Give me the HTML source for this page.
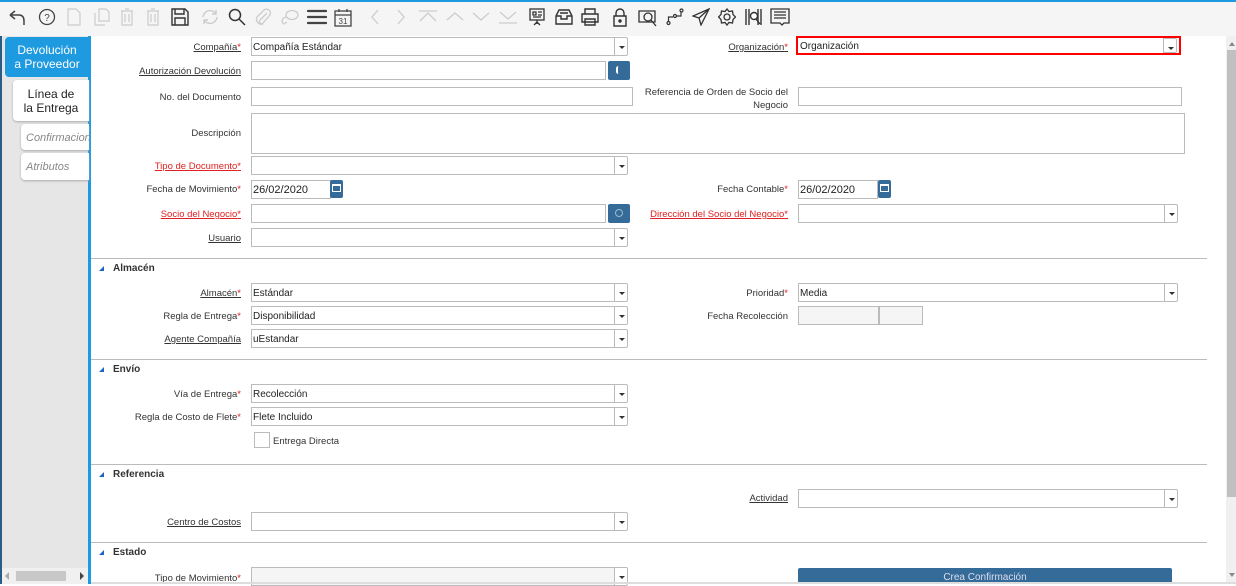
<!DOCTYPE html>
<html><head><meta charset="utf-8"><style>
*{box-sizing:border-box;margin:0;padding:0}
body{width:1236px;height:584px;overflow:hidden;background:#fff;font-family:"Liberation Sans",sans-serif;font-size:10px;color:#333;position:relative}
.a{position:absolute}
.tb{left:0;top:0;width:1236px;height:36px;background:#f5f5f5;border-top:2px solid #1e9ae0}
.left{left:0;top:36px;width:91px;height:548px;background:#e6e6e6;border-left:2px solid #2a5d86;border-right:3px solid #1e9ae0}
.tab{position:absolute;font-size:12px;text-align:center;border-radius:4px 0 0 4px;line-height:14px}
.lbl{position:absolute;text-align:right;font-size:9.5px;color:#333;white-space:nowrap;margin-top:1px}
.u{text-decoration:underline}
.r{color:#e02020}
.s{color:#e02020}
.in{position:absolute;height:19px;border:1px solid #bbb;background:#fff;font-size:10px;padding:4px 1px 2px;white-space:nowrap;color:#222}
.dd{position:absolute;width:14px;height:19px;border:1px solid #bbb;background:#fff;border-radius:0 2px 2px 0}
.dd:after{content:"";position:absolute;left:4px;top:8px;border-left:3px solid transparent;border-right:3px solid transparent;border-top:3px solid #333}
.sep{position:absolute;left:91px;width:1116px;height:1px;background:#bbb}
.sh{position:absolute;left:113px;font-size:10px;font-weight:bold;color:#333}
.tri{position:absolute;left:99px;width:0;height:0;border-left:5px solid transparent;border-bottom:5px solid #1b64c8}
.btn{position:absolute;background:#356b99;border-radius:2px}
svg{position:absolute;top:8px}
</style></head><body>
<div class="a tb"></div>
<svg style="left:7px" width="20" height="20" viewBox="0 0 20 20" fill="none" stroke="#444" stroke-width="1.5"><path d="M3 7 L8 3 M3 7 L8 11 M3 7 H12 Q17 7 17 13 V17"/></svg>
<svg style="left:38px" width="18" height="18" viewBox="0 0 18 18" fill="none" stroke="#444" stroke-width="1.3"><circle cx="9" cy="9" r="7.5"/><text x="9" y="13" font-size="10" text-anchor="middle" fill="#444" stroke="none" font-family="Liberation Sans">?</text></svg>
<svg style="left:67px" width="14" height="18" viewBox="0 0 14 18" fill="none" stroke="#ccc" stroke-width="1.2"><path d="M1 1H9L13 5V17H1Z"/></svg>
<svg style="left:94px" width="16" height="18" viewBox="0 0 16 18" fill="none" stroke="#ccc" stroke-width="1.2"><path d="M5 1H12L15 4V13H5Z M1 5V17H11"/></svg>
<svg style="left:120px" width="14" height="18" viewBox="0 0 14 18" fill="none" stroke="#ccc" stroke-width="1.2"><path d="M1 3H13 M5 1H9 M2 3V17H12V3 M5 6V14 M9 6V14"/></svg>
<svg style="left:146px" width="14" height="18" viewBox="0 0 14 18" fill="none" stroke="#ccc" stroke-width="1.2"><path d="M1 3H13 M5 1H9 M2 3V17H12V3 M5 6V14 M9 6V14"/></svg>
<svg style="left:171px" width="18" height="18" viewBox="0 0 18 18" fill="none" stroke="#333" stroke-width="1.4"><path d="M1 1H14L17 4V17H1Z M4 1V6H13V1 M4 10H14V17H4Z"/></svg>
<svg style="left:200px" width="20" height="18" viewBox="0 0 20 18" fill="none" stroke="#ccc" stroke-width="1.4"><path d="M3 9A7 7 0 0 1 16 6 M17 9A7 7 0 0 1 4 12 M16 2V6H12 M4 16V12H8"/></svg>
<svg style="left:228px" width="18" height="18" viewBox="0 0 18 18" fill="none" stroke="#333" stroke-width="1.5"><circle cx="7" cy="7" r="5.5"/><path d="M11 11L17 17"/></svg>
<svg style="left:254px" width="18" height="18" viewBox="0 0 18 18" fill="none" stroke="#ccc" stroke-width="1.3"><path d="M13 5L6 12A2 2 0 0 0 9 15L16 7A4 4 0 0 0 10 2L3 9A5 5 0 0 0 9 16"/></svg>
<svg style="left:280px" width="20" height="18" viewBox="0 0 20 18" fill="none" stroke="#ccc" stroke-width="1.3"><ellipse cx="12" cy="7" rx="6" ry="4.5"/><path d="M6 9A5 4 0 0 0 4 16L7 14"/></svg>
<svg style="left:307px" width="20" height="18" viewBox="0 0 20 18" fill="none" stroke="#444" stroke-width="2.2"><path d="M1 3H19 M1 9H19 M1 15H19" stroke-linecap="round"/></svg>
<svg style="left:334px" width="18" height="19" viewBox="0 0 18 19" fill="none" stroke="#444" stroke-width="1.3"><rect x="1" y="3" width="16" height="15"/><path d="M1 7H17 M5 1V4 M13 1V4"/><text x="9" y="16" font-size="8" text-anchor="middle" fill="#444" stroke="none" font-family="Liberation Sans">31</text></svg>
<svg style="left:370px" width="10" height="18" viewBox="0 0 10 18" fill="none" stroke="#ccc" stroke-width="1.3"><path d="M8 2L2 9L8 16"/></svg>
<svg style="left:396px" width="10" height="18" viewBox="0 0 10 18" fill="none" stroke="#ccc" stroke-width="1.3"><path d="M2 2L8 9L2 16"/></svg>
<svg style="left:418px" width="20" height="18" viewBox="0 0 20 18" fill="none" stroke="#ccc" stroke-width="1.3"><path d="M1 3H19 M2 13L10 5L18 13"/></svg>
<svg style="left:445px" width="20" height="18" viewBox="0 0 20 18" fill="none" stroke="#ccc" stroke-width="1.3"><path d="M2 12L10 5L18 12"/></svg>
<svg style="left:471px" width="20" height="18" viewBox="0 0 20 18" fill="none" stroke="#ccc" stroke-width="1.3"><path d="M2 5L10 12L18 5"/></svg>
<svg style="left:498px" width="20" height="18" viewBox="0 0 20 18" fill="none" stroke="#ccc" stroke-width="1.3"><path d="M2 4L10 11L18 4 M1 15H19"/></svg>
<svg style="left:529px" width="16" height="18" viewBox="0 0 16 18" fill="none" stroke="#333" stroke-width="1.3"><rect x="1" y="1" width="14" height="11"/><path d="M4 4H7V7H4Z M9 4H13 M9 7H13 M4 9H12 M8 12V16 M5 17L8 14L11 17"/></svg>
<svg style="left:555px" width="18" height="18" viewBox="0 0 18 18" fill="none" stroke="#333" stroke-width="1.4"><path d="M1 8L4 2H14L17 8V16H1Z M1 8H6V11H12V8H17 M5 5H13"/></svg>
<svg style="left:581px" width="18" height="18" viewBox="0 0 18 18" fill="none" stroke="#333" stroke-width="1.4"><path d="M4 6V1H14V6 M1 6H17V14H1Z M4 11H14V17H4Z"/></svg>
<svg style="left:613px" width="14" height="19" viewBox="0 0 14 19" fill="none" stroke="#333" stroke-width="1.4"><path d="M3 8V5A4 4 0 0 1 11 5V8 M1 8H13V18H1Z"/><circle cx="7" cy="13" r="1" fill="#333"/></svg>
<svg style="left:638px" width="20" height="19" viewBox="0 0 20 19" fill="none" stroke="#333" stroke-width="1.3"><path d="M1 3H17V14H1Z"/><circle cx="10" cy="9" r="4"/><path d="M13 12L18 18"/></svg>
<svg style="left:666px" width="18" height="18" viewBox="0 0 18 18" fill="none" stroke="#333" stroke-width="1.2"><circle cx="2.5" cy="15" r="1.5"/><circle cx="9" cy="8" r="1.5"/><circle cx="15.5" cy="2.5" r="1.5"/><path d="M2.5 13V9H7 M11 8H15V4"/></svg>
<svg style="left:692px" width="18" height="18" viewBox="0 0 18 18" fill="none" stroke="#333" stroke-width="1.3"><path d="M17 1L1 8L7 10L9 17Z M17 1L7 10"/></svg>
<svg style="left:718px" width="18" height="18" viewBox="0 0 18 18" fill="none" stroke="#333" stroke-width="1.3"><circle cx="9" cy="9" r="3"/><path d="M9 1L11 3.5L14.5 3L15 6.5L17.5 9L15 11.5L14.5 15L11 14.5L9 17L7 14.5L3.5 15L3 11.5L0.5 9L3 6.5L3.5 3L7 3.5Z"/></svg>
<svg style="left:745px" width="18" height="18" viewBox="0 0 18 18" fill="none" stroke="#333" stroke-width="1.4"><path d="M1 1V17 M4 1V17 M13 1V17 M16 1V17"/><circle cx="9" cy="8" r="3.5" fill="#fff"/><path d="M11 11L15 16"/></svg>
<svg style="left:770px" width="20" height="19" viewBox="0 0 20 19" fill="none" stroke="#333" stroke-width="1.3"><path d="M1 1H19V15H14L12 17L10 15H1Z M4 4H16 M4 7H16 M4 10H16"/></svg>

<div class="a left"></div>
<div class="tab" style="left:5px;top:37px;width:84px;height:40px;background:#1e9ae0;color:#fff;padding-top:6px">Devolución<br>a Proveedor</div>
<div class="tab" style="left:13px;top:80px;width:76px;height:41px;background:#fff;color:#222;padding-top:7px;box-shadow:0 1px 2px #aaa">Línea de<br>la Entrega</div>
<div class="tab" style="left:21px;top:124px;width:68px;height:26px;background:#fff;color:#888;font-style:italic;font-size:11px;text-align:left;padding:7px 0 0 5px;overflow:hidden;white-space:nowrap;box-shadow:0 1px 2px #aaa">Confirmacion</div>
<div class="tab" style="left:21px;top:153px;width:68px;height:27px;background:#fff;color:#888;font-style:italic;font-size:11px;text-align:left;padding:7px 0 0 5px;box-shadow:0 1px 2px #aaa">Atributos</div>
<div class="a" style="left:2px;top:568px;width:86px;height:16px;background:#f0f0f0"></div>
<div class="a" style="left:16px;top:571px;width:50px;height:10px;background:#c8c8c8"></div>
<div class="a" style="left:5px;top:572px;border-right:4px solid #aaa;border-top:4px solid transparent;border-bottom:4px solid transparent"></div>
<div class="a" style="left:80px;top:572px;border-left:4px solid #444;border-top:4px solid transparent;border-bottom:4px solid transparent"></div>

<div class="a" style="left:1226px;top:36px;width:10px;height:548px;background:#f0f0f0"></div>
<div class="a" style="left:1227px;top:50px;width:9px;height:447px;background:#c0c0c0"></div>
<div class="a" style="left:1229px;top:42px;border-bottom:4px solid #888;border-left:3px solid transparent;border-right:3px solid transparent"></div>
<div class="a" style="left:1229px;top:573px;border-top:4px solid #888;border-left:3px solid transparent;border-right:3px solid transparent"></div>

<div class="lbl u" style="right:995px;top:41px">Compañía<span class="s">*</span></div>
<div class="in" style="left:251px;top:37px;width:364px">Compañía Estándar</div><div class="dd" style="left:614px;top:37px"></div>
<div class="lbl u" style="right:995px;top:65px">Autorización Devolución</div>
<div class="in" style="left:251px;top:61px;width:355px"></div>
<div class="btn" style="left:608px;top:61px;width:22px;height:19px"><div style="position:absolute;left:8px;top:5px;width:5px;height:8px;border-left:2px solid #fff;border-radius:3px"></div></div>
<div class="lbl" style="right:995px;top:91px">No. del Documento</div>
<div class="in" style="left:251px;top:87px;width:382px"></div>
<div class="lbl" style="right:995px;top:127px">Descripción</div>
<div class="in" style="left:251px;top:113px;width:934px;height:41px"></div>
<div class="lbl u r" style="right:995px;top:160px">Tipo de Documento<span class="s">*</span></div>
<div class="in" style="left:251px;top:156px;width:364px"></div><div class="dd" style="left:614px;top:156px"></div>
<div class="lbl" style="right:995px;top:183px">Fecha de Movimiento<span class="s">*</span></div>
<div class="in" style="left:251px;top:180px;width:80px;font-size:11px;padding-top:3px">26/02/2020</div>
<div class="btn" style="left:330px;top:180px;width:13px;height:18px"><div style="position:absolute;left:2px;top:4px;width:9px;height:8px;border:1px solid #fff;border-top-width:2px"></div></div>
<div class="lbl u r" style="right:995px;top:208px">Socio del Negocio<span class="s">*</span></div>
<div class="in" style="left:251px;top:204px;width:355px"></div>
<div class="btn" style="left:608px;top:204px;width:22px;height:19px"><div style="position:absolute;left:7px;top:5px;width:8px;height:8px;border:1px solid #9bb8d0;border-radius:50%"></div></div>
<div class="lbl u" style="right:995px;top:232px">Usuario</div>
<div class="in" style="left:251px;top:228px;width:364px"></div><div class="dd" style="left:614px;top:228px"></div>

<div class="lbl u" style="right:448px;top:41px">Organización<span class="s">*</span></div>
<div class="in" style="left:796px;top:36px;width:385px;height:19px;border:2px solid #f00;padding:3px 2px">Organización</div><div class="dd" style="left:1163px;top:38px;height:15px"></div>
<div class="lbl" style="right:448px;top:85px;line-height:13px">Referencia de Orden de Socio del<br>Negocio</div>
<div class="in" style="left:798px;top:87px;width:384px"></div>
<div class="lbl" style="right:448px;top:183px">Fecha Contable<span class="s">*</span></div>
<div class="in" style="left:798px;top:180px;width:80px;font-size:11px;padding-top:3px">26/02/2020</div>
<div class="btn" style="left:878px;top:180px;width:13px;height:18px"><div style="position:absolute;left:2px;top:4px;width:9px;height:8px;border:1px solid #fff;border-top-width:2px"></div></div>
<div class="lbl u r" style="right:448px;top:208px">Dirección del Socio del Negocio<span class="s">*</span></div>
<div class="in" style="left:798px;top:204px;width:367px"></div><div class="dd" style="left:1164px;top:204px"></div>

<div class="sep" style="top:258px"></div>
<div class="tri" style="top:266px"></div><div class="sh" style="top:263px">Almacén</div>
<div class="lbl u" style="right:995px;top:287px">Almacén<span class="s">*</span></div>
<div class="in" style="left:251px;top:283px;width:364px">Estándar</div><div class="dd" style="left:614px;top:283px"></div>
<div class="lbl" style="right:995px;top:310px">Regla de Entrega<span class="s">*</span></div>
<div class="in" style="left:251px;top:306px;width:364px">Disponibilidad</div><div class="dd" style="left:614px;top:306px"></div>
<div class="lbl u" style="right:995px;top:333px">Agente Compañía</div>
<div class="in" style="left:251px;top:329px;width:364px">uEstandar</div><div class="dd" style="left:614px;top:329px"></div>
<div class="lbl" style="right:448px;top:287px">Prioridad<span class="s">*</span></div>
<div class="in" style="left:798px;top:283px;width:367px">Media</div><div class="dd" style="left:1164px;top:283px"></div>
<div class="lbl" style="right:448px;top:310px">Fecha Recolección</div>
<div class="in" style="left:798px;top:306px;width:81px;background:#f5f5f5"></div>
<div class="in" style="left:879px;top:306px;width:44px;background:#f5f5f5"></div>

<div class="sep" style="top:359px"></div>
<div class="tri" style="top:367px"></div><div class="sh" style="top:364px">Envío</div>
<div class="lbl" style="right:995px;top:388px">Vía de Entrega<span class="s">*</span></div>
<div class="in" style="left:251px;top:384px;width:364px">Recolección</div><div class="dd" style="left:614px;top:384px"></div>
<div class="lbl" style="right:995px;top:411px">Regla de Costo de Flete<span class="s">*</span></div>
<div class="in" style="left:251px;top:407px;width:364px">Flete Incluido</div><div class="dd" style="left:614px;top:407px"></div>
<div class="a" style="left:254px;top:432px;width:16px;height:16px;border:1px solid #bbb;background:#fff"></div>
<div class="lbl" style="left:273px;top:435px">Entrega Directa</div>

<div class="sep" style="top:464px"></div>
<div class="tri" style="top:472px"></div><div class="sh" style="top:469px">Referencia</div>
<div class="lbl u" style="right:448px;top:492px">Actividad</div>
<div class="in" style="left:798px;top:489px;width:367px"></div><div class="dd" style="left:1164px;top:489px"></div>
<div class="lbl u" style="right:995px;top:516px">Centro de Costos</div>
<div class="in" style="left:251px;top:512px;width:364px"></div><div class="dd" style="left:614px;top:512px"></div>

<div class="sep" style="top:542px"></div>
<div class="tri" style="top:550px"></div><div class="sh" style="top:547px">Estado</div>
<div class="lbl" style="right:995px;top:572px">Tipo de Movimiento<span class="s">*</span></div>
<div class="in" style="left:251px;top:567px;width:364px;background:#f5f5f5"></div><div class="dd" style="left:614px;top:567px"></div>
<div class="btn" style="left:798px;top:568px;width:374px;height:16px;color:#dde;text-align:center;font-size:10px;padding-top:4px">Crea Confirmación</div>
<div class="a" style="left:91px;top:582px;width:1145px;height:2px;background:#ddd"></div>
</body></html>
